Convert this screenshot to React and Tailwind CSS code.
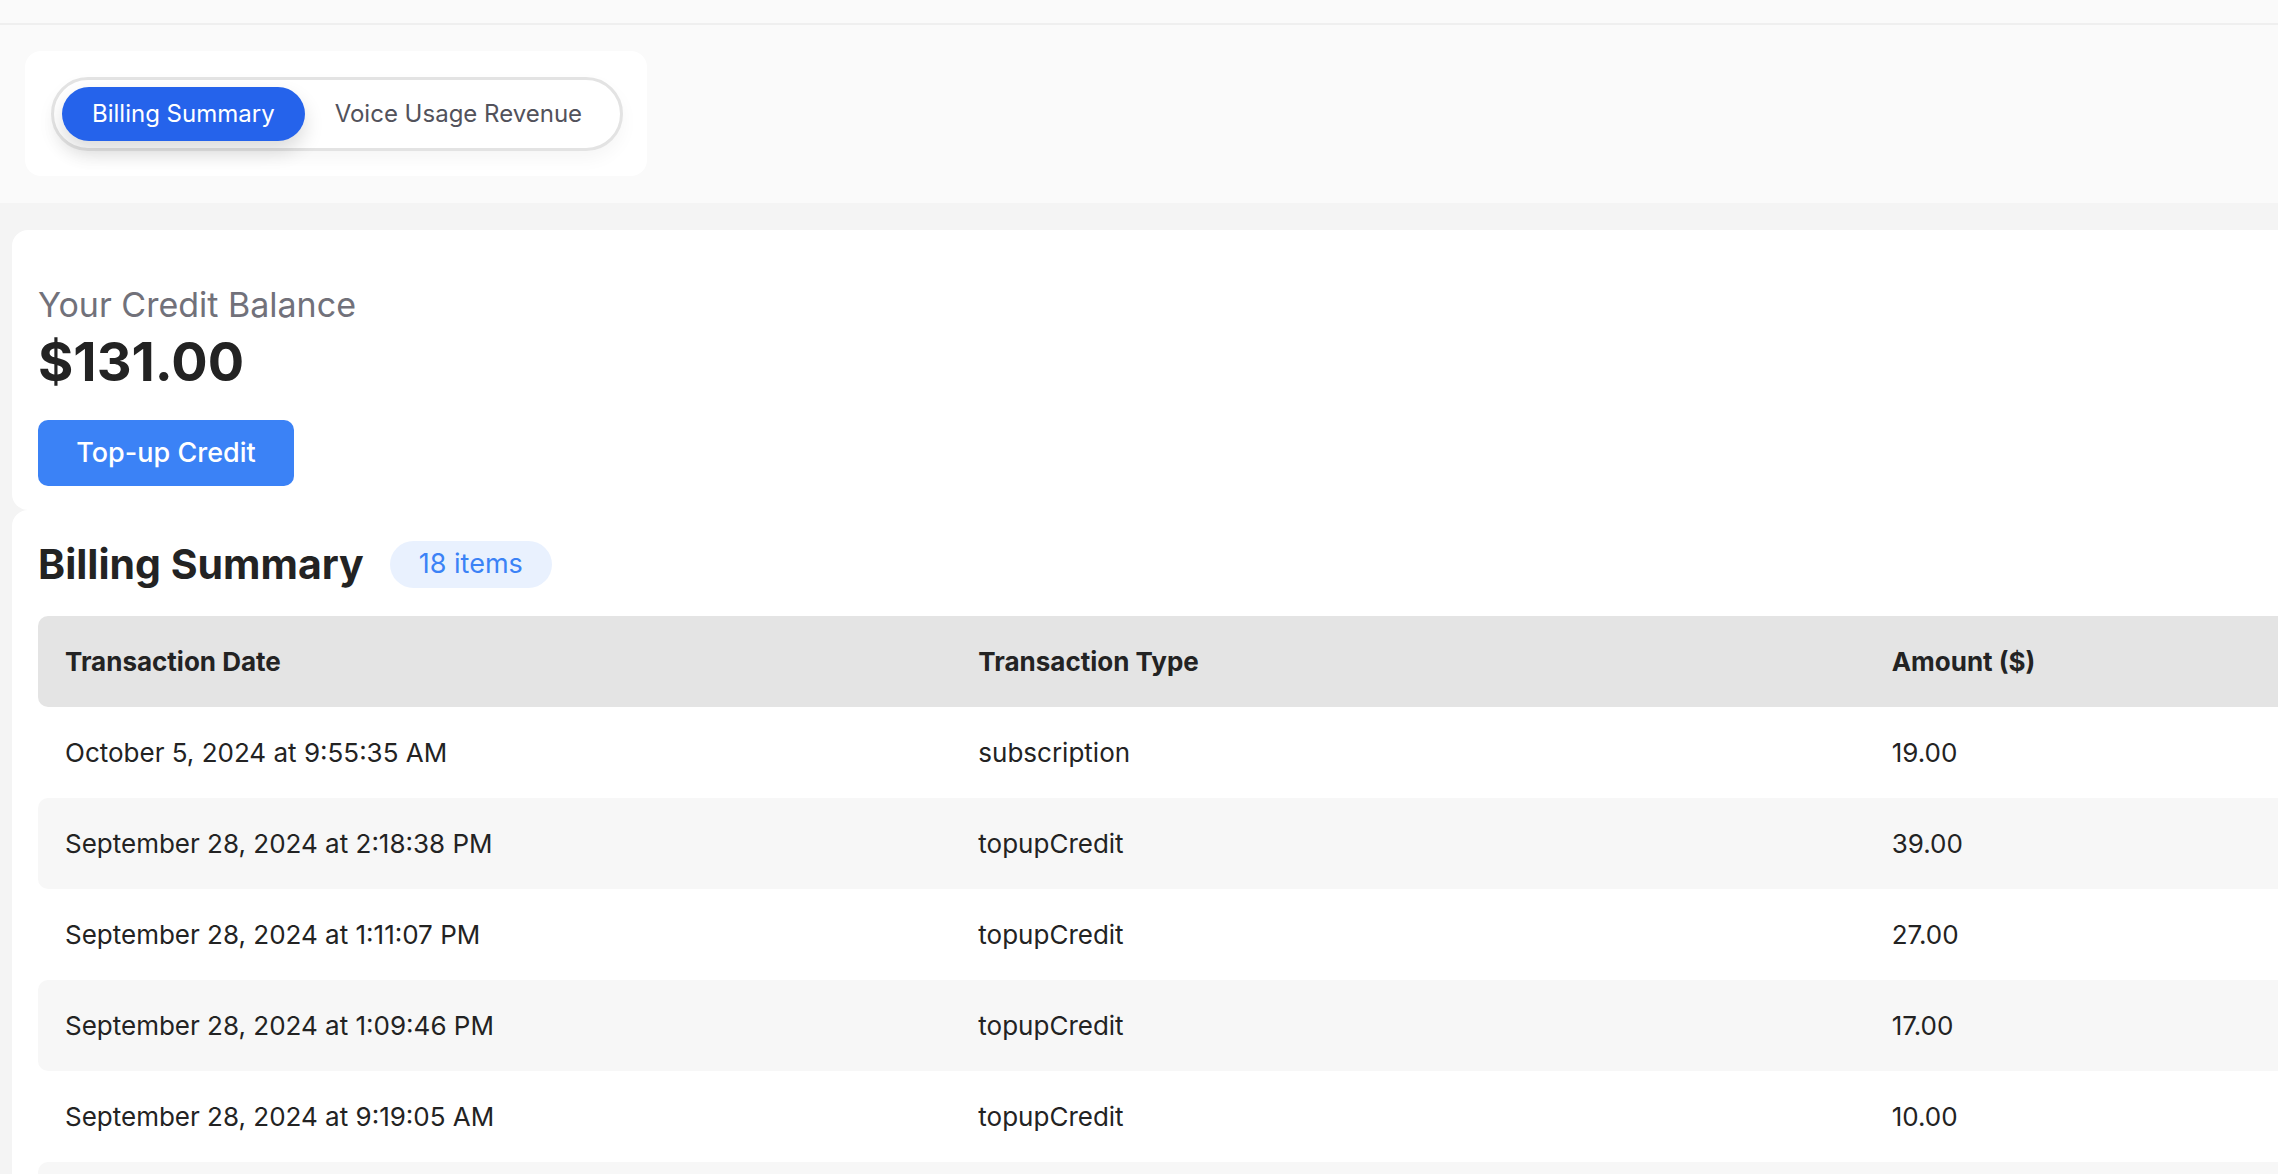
import React from 'react';

const rows = [
  { date: 'October 5, 2024 at 9:55:35 AM', type: 'subscription', amount: '19.00' },
  { date: 'September 28, 2024 at 2:18:38 PM', type: 'topupCredit', amount: '39.00' },
  { date: 'September 28, 2024 at 1:11:07 PM', type: 'topupCredit', amount: '27.00' },
  { date: 'September 28, 2024 at 1:09:46 PM', type: 'topupCredit', amount: '17.00' },
  { date: 'September 28, 2024 at 9:19:05 AM', type: 'topupCredit', amount: '10.00' },
  { date: 'September 27, 2024 at 6:42:11 PM', type: 'topupCredit', amount: '25.00' },
];

const App = () => {
  return (
    <div className="h-screen w-screen overflow-hidden bg-[#f4f4f4] font-[Inter,sans-serif] text-[#232323]">
      <div className="w-[2830px]">
        {/* Top bar */}
        <div className="h-[25px] bg-[#fafafa] border-b-2 border-[#efefef]" />

        {/* Tabs header */}
        <div className="bg-[#fafafa] pt-[26px] pb-[27px] pl-[25px]">
          <div className="w-[622px] h-[125px] bg-white rounded-[16px] px-[26px] pt-[26px]">
            <div className="inline-flex items-center h-[74px] border-[3px] border-[#e3e3e3] rounded-full bg-white px-[8px] whitespace-nowrap shadow-[0_8px_18px_rgba(0,0,0,0.04)]">
              <button className="h-[54px] px-[30px] rounded-full bg-[#2563eb] text-white text-[24px] whitespace-nowrap shadow-[0_10px_20px_rgba(0,0,0,0.14)]">
                Billing Summary
              </button>
              <button className="h-[54px] px-[30px] rounded-full text-[#52525b] text-[24px] whitespace-nowrap">
                Voice Usage Revenue
              </button>
            </div>
          </div>
        </div>

        {/* Content */}
        <div className="pt-[27px] pl-[12px]">
          {/* Credit balance */}
          <div className="bg-white rounded-[16px] pl-[26px] pt-[55px] pb-[24px] h-[280px]">
            <p className="text-[34px] leading-[40px] text-[#71717a]">Your Credit Balance</p>
            <p className="text-[54px] leading-[60px] font-bold mt-[7px]">$131.00</p>
            <button className="mt-[28px] w-[256px] h-[66px] rounded-[10px] bg-[#3b82f6] text-white text-[27px] font-medium">
              Top-up Credit
            </button>
          </div>

          {/* Billing summary */}
          <div className="bg-white rounded-[16px] pl-[26px] pt-[31px]">
            <div className="flex items-center gap-[26px]">
              <h2 className="text-[41px] leading-[47px] font-bold">Billing Summary</h2>
              <span className="h-[47px] px-[29px] flex items-center rounded-full bg-[#e9f1fe] text-[#3b82f6] text-[27px]">
                18 items
              </span>
            </div>

            <div className="mt-[28px] w-[2740px]">
              <div className="grid grid-cols-3 h-[91px] items-center bg-[#e4e4e4] rounded-[10px] text-[26px] font-bold">
                <div className="pl-[27px]">Transaction Date</div>
                <div className="pl-[27px]">Transaction Type</div>
                <div className="pl-[27px]">Amount ($)</div>
              </div>
              {rows.map((row, idx) => (
                <div
                  key={idx}
                  className={`grid grid-cols-3 h-[91px] items-center rounded-[10px] text-[26px] ${idx % 2 === 1 ? 'bg-[#f7f7f7]' : 'bg-white'}`}
                >
                  <div className="pl-[27px]">{row.date}</div>
                  <div className="pl-[27px]">{row.type}</div>
                  <div className="pl-[27px]">{row.amount}</div>
                </div>
              ))}
            </div>
          </div>
        </div>
      </div>
    </div>
  );
};

export default App;
